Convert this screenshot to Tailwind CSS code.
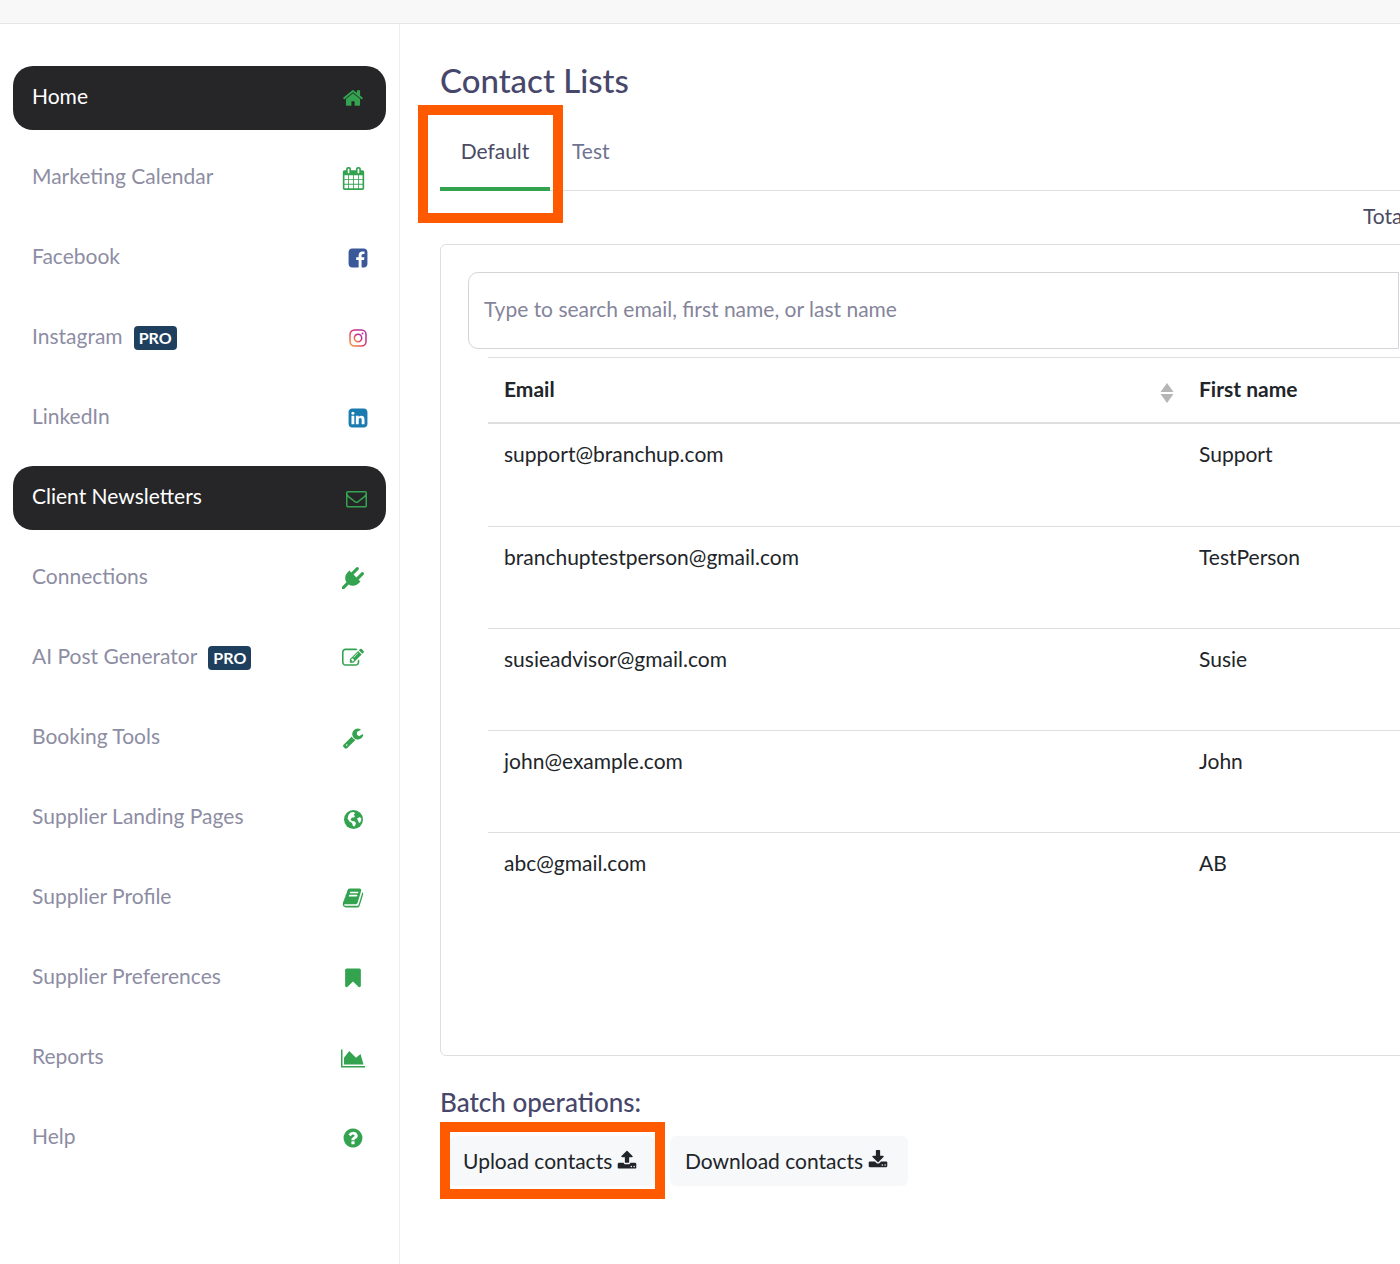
<!DOCTYPE html>
<html><head><meta charset="utf-8"><script src="https://cdn.jsdelivr.net/npm/@tailwindcss/browser@4"></script></head>
<body class="bg-white">
<div class="relative w-[1400px] h-[1264px] overflow-hidden font-['Lato',sans-serif] text-[21px] leading-[30px] text-[#212529]">
  <header class="h-[24px] bg-[#f8f8f9] border-b border-[#e6e6e8]"></header>
  <div class="flex h-[1240px]">
    <nav class="w-[400px] shrink-0 border-r border-[#eeeef0] pt-[42px] pl-[13px] pr-[13px] flex flex-col gap-[16px] text-[#8d8da3]">
      <a class="h-[64px] bg-[#262628] rounded-[20px] flex items-center justify-between pl-[19px] text-white"><span class="mb-[4px]">Home</span><svg class="w-[22px] h-[22px] mr-[22px] text-[#34a350] fill-current" viewBox="0 0 1792 1792"><path d="M1472 992v480q0 26-19 45t-45 19h-384v-384h-256v384h-384q-26 0-45-19t-19-45v-480q0-1 .5-3t.5-3l575-474 575 474q1 2 1 6zm223-69l-62 74q-8 9-21 11h-3q-13 0-21-7l-692-577-692 577q-12 8-24 7-13-2-21-11l-62-74q-8-10-7-23.500t11-21.500l719-599q32-26 76-26t76 26l244 204v-195q0-14 9-23t23-9h192q14 0 23 9t9 23v408l219 182q10 8 11 21.500t-7 23.500z"/></svg></a>
      <a class="h-[64px] flex items-center justify-between pl-[19px]"><span class="mb-[4px]">Marketing Calendar</span><svg class="w-[23px] h-[23px] mr-[21px] text-[#34a350] fill-current" viewBox="0 0 1792 1792"><path d="M192 1664h288v-288h-288v288zm352 0h320v-288h-320v288zm-352-352h288v-320h-288v320zm352 0h320v-320h-320v320zm-352-384h288v-288h-288v288zm736 736h320v-288h-320v288zm-384-736h320v-288h-320v288zm768 736h288v-288h-288v288zm-384-352h320v-320h-320v320zm-352-864v-288q0-13-9.500-22.500t-22.500-9.500h-64q-13 0-22.500 9.500t-9.500 22.500v288q0 13 9.500 22.500t22.500 9.500h64q13 0 22.500-9.500t9.500-22.500zm736 864h288v-320h-288v320zm-384-384h320v-288h-320v288zm384 0h288v-288h-288v288zm32-480v-288q0-13-9.500-22.500t-22.500-9.500h-64q-13 0-22.500 9.500t-9.500 22.500v288q0 13 9.500 22.500t22.500 9.500h64q13 0 22.500-9.500t9.500-22.500zm384-64v1280q0 52-38 90t-90 38h-1408q-52 0-90-38t-38-90v-1280q0-52 38-90t90-38h128v-96q0-66 47-113t113-47h64q66 0 113 47t47 113v96h384v-96q0-66 47-113t113-47h64q66 0 113 47t47 113v96h128q52 0 90 38t38 90z"/></svg></a>
      <a class="h-[64px] flex items-center justify-between pl-[19px]"><span class="mb-[4px]">Facebook</span><svg class="w-[22px] h-[22px] mr-[17px] text-[#3b5998] fill-current" viewBox="0 0 1792 1792"><path d="M1376 128q119 0 203.500 84.500t84.500 203.500v960q0 119-84.500 203.500t-203.500 84.500h-188v-595h199l30-232h-229v-148q0-56 23.500-84t91.500-28l122-1v-207q-63-9-178-9-136 0-217.500 80t-81.500 226v171h-200v232h200v595h-532q-119 0-203.500-84.500t-84.500-203.500v-960q0-119 84.500-203.500t203.500-84.500h960z"/></svg></a>
      <a class="h-[64px] flex items-center justify-between pl-[19px]"><span class="mb-[4px] flex items-center">Instagram<span class="ml-[11px] mt-[4px] h-[24px] w-[43px] rounded-[4px] bg-[#1f3f5f] text-white text-[16px] font-bold leading-[24px] text-center">PRO</span></span><svg class="w-[18px] h-[18px] mr-[19px]" viewBox="0 0 18 18" fill="none"><defs><linearGradient id="ig" x1="0" y1="1" x2="1" y2="0"><stop offset="0" stop-color="#f9a13c"/><stop offset=".5" stop-color="#e1306c"/><stop offset="1" stop-color="#a02fb0"/></linearGradient></defs><rect x="1" y="1" width="16" height="16" rx="4.500" stroke="url(#ig)" stroke-width="1.500"/><circle cx="9" cy="9" r="3.700" stroke="url(#ig)" stroke-width="1.500"/><circle cx="13.500" cy="4.500" r="1" fill="#c13584"/></svg></a>
      <a class="h-[64px] flex items-center justify-between pl-[19px]"><span class="mb-[4px]">LinkedIn</span><svg class="w-[22px] h-[22px] mr-[17px] text-[#1a7bb0] fill-current" viewBox="0 0 1792 1792"><path d="M365 1414h231v-694h-231v694zm246-908q-1-52-36-86t-93-34-94.500 34-36.500 86q0 51 35.500 85.500t92.500 34.500h1q59 0 95-34.500t36-85.500zm585 908h231v-398q0-154-73-233t-193-79q-136 0-209 117h2v-101h-231q3 66 0 694h231v-388q0-38 7-56 15-35 45-59.500t74-24.500q116 0 116 157v371zm468-998v960q0 119-84.500 203.500t-203.500 84.500h-960q-119 0-203.500-84.500t-84.500-203.500v-960q0-119 84.500-203.500t203.500-84.500h960q119 0 203.500 84.500t84.500 203.500z"/></svg></a>
      <a class="h-[64px] bg-[#262628] rounded-[20px] flex items-center justify-between pl-[19px] text-white"><span class="mb-[4px]">Client Newsletters</span><svg class="w-[21px] h-[21px] mr-[19px] text-[#34a350] fill-current" viewBox="0 0 1792 1792"><path d="M1664 1504v-768q-32 36-69 66-268 206-426 338-51 43-83 67t-86.500 48.500-102.500 24.500h-2q-48 0-102.500-24.500t-86.500-48.500-83-67q-158-132-426-338-37-30-69-66v768q0 13 9.500 22.500t22.500 9.500h1472q13 0 22.500-9.500t9.500-22.500zm0-1051v-24.500l-.5-13-3-12.500-5.500-9-9-7.500-14-2.500h-1472q-13 0-22.500 9.500t-9.500 22.500q0 168 147 284 193 152 401 317 6 5 35 29.500t46 37.500 44.500 31.500 50.500 27.500 43 9h2q20 0 43-9t50.500-27.500 44.500-31.500 46-37.500 35-29.500q208-165 401-317 54-43 100.500-115.500t46.500-131.500zm128-37v1088q0 66-47 113t-113 47h-1472q-66 0-113-47t-47-113v-1088q0-66 47-113t113-47h1472q66 0 113 47t47 113z"/></svg></a>
      <a class="h-[64px] flex items-center justify-between pl-[19px]"><span class="mb-[4px]">Connections</span><svg class="w-[22px] h-[22px] mr-[22px] text-[#34a350] fill-current" viewBox="0 0 1792 1792"><path d="M1755 453q37 38 37 90.500t-37 90.500l-401 400 150 150-160 160q-163 163-389.500 186.500t-411.500-100.500l-362 362h-181v-181l362-362q-124-185-100.500-411.500t186.500-389.500l160-160 150 150 400-401q38-37 91-37t90 37 37 90.500-37 90.500l-400 401 234 234 401-400q38-37 91-37t90 37z"/></svg></a>
      <a class="h-[64px] flex items-center justify-between pl-[19px]"><span class="mb-[4px] flex items-center">AI Post Generator<span class="ml-[11px] mt-[4px] h-[24px] w-[43px] rounded-[4px] bg-[#1f3f5f] text-white text-[16px] font-bold leading-[24px] text-center">PRO</span></span><svg class="w-[22px] h-[22px] mr-[22px] text-[#34a350] fill-current" viewBox="0 0 1792 1792"><path d="M888 1184l116-116-152-152-116 116v56h96v96h56zm440-720q-16-16-33 1l-350 350q-17 17-1 33t33-1l350-350q17-17 1-33zm80 594v190q0 119-84.500 203.500t-203.500 84.500h-832q-119 0-203.500-84.500t-84.500-203.500v-832q0-119 84.500-203.500t203.500-84.500h832q63 0 117 25 15 7 18 23 3 17-9 29l-49 49q-14 14-32 8-23-6-45-6h-832q-66 0-113 47t-47 113v832q0 66 47 113t113 47h832q66 0 113-47t47-113v-126q0-13 9-22l64-64q15-15 35-7t20 29zm-96-738l288 288-672 672h-288v-288zm444 132l-92 92-288-288 92-92q28-28 68-28t68 28l152 152q28 28 28 68t-28 68z"/></svg></a>
      <a class="h-[64px] flex items-center justify-between pl-[19px]"><span class="mb-[4px]">Booking Tools</span><svg class="w-[22px] h-[22px] mr-[22px] text-[#34a350] fill-current" viewBox="0 0 1792 1792"><path d="M448 1472q0-26-19-45t-45-19-45 19-19 45 19 45 45 19 45-19 19-45zm644-420l-682 682q-37 37-90 37-52 0-91-37l-106-108q-38-36-38-90 0-53 38-91l681-681q39 98 114.500 173.500t173.500 114.500zm634-435q0 39-23 106-47 134-164.500 217.500t-258.500 83.500q-185 0-316.500-131.500t-131.500-316.500 131.500-316.500 316.500-131.500q58 0 121.500 16.500t107.500 46.500q16 11 16 28t-16 28l-293 169v224l193 107q5-3 79-48.500t135.500-81 70.500-35.500q15 0 23.500 10t8.500 25z"/></svg></a>
      <a class="h-[64px] flex items-center justify-between pl-[19px]"><span class="mb-[4px]">Supplier Landing Pages</span><svg class="w-[19px] h-[19px] mr-[23px] mt-[2px]" viewBox="0 0 19 19"><circle cx="9.500" cy="9.500" r="9.500" fill="#34a350"/><path d="M6.500 2.500l3.500-.5 1 1.500-1.500 1.500 1.500 1-1 1.500h-2l-1.500 2 1.500 1.500 3 .5 1 2-1.500 3-1.500-.5-1-3-2.500-1.500-2-3 1-3.500zM13 8.500l3-1.500 1.500 2-1 3-1.500 1-1-2.500z" fill="#fff"/></svg></a>
      <a class="h-[64px] flex items-center justify-between pl-[19px]"><span class="mb-[4px]">Supplier Profile</span><svg class="w-[22px] h-[22px] mr-[22px] text-[#34a350] fill-current" viewBox="0 0 1792 1792"><path d="M1703 478q40 57 18 129l-275 906q-19 64-76.500 107.500t-122.500 43.500h-923q-77 0-148.500-53.500t-99.500-131.500q-24-67-2-127 0-4 3-27t4-37q1-8-3-21.500t-3-19.500q2-11 8-21t16.500-23.500 16.500-23.500q23-38 45-91.500t30-91.500q3-10 .5-30t-.5-28q3-11 17-28t17-23q21-36 42-92t25-90q1-9-2.500-32t.5-28q4-13 22-30.500t22-22.500q19-26 42.500-84.500t27.500-96.500q1-8-3-25.500t-2-26.500q2-8 9-18t18-23 17-21q8-12 16.500-30.500t15-35 16-36 19.500-32 26.500-23.500 36-11.500 47.500 5.500l-1 3q38-9 51-9h761q74 0 114 56t18 130l-274 906q-36 119-71.500 153.500t-128.500 34.500h-869q-27 0-38 15-11 16-1 43 24 70 144 70h923q29 0 56-15.500t35-41.500l300-987q7-22 5-57 38 15 59 43zm-1064 2q-4 13 2 22.500t20 9.500h608q13 0 25.500-9.500t16.500-22.500l21-64q4-13-2-22.500t-20-9.500h-608q-13 0-25.500 9.500t-16.500 22.500zm-83 256q-4 13 2 22.500t20 9.500h608q13 0 25.500-9.500t16.500-22.500l21-64q4-13-2-22.500t-20-9.500h-608q-13 0-25.500 9.500t-16.500 22.500z"/></svg></a>
      <a class="h-[64px] flex items-center justify-between pl-[19px]"><span class="mb-[4px]">Supplier Preferences</span><svg class="w-[22px] h-[22px] mr-[22px] text-[#34a350] fill-current" viewBox="0 0 1792 1792"><path d="M1420 128q23 0 44 9 33 13 52.500 41t19.500 62v1289q0 34-19.500 62t-52.500 41q-19 8-44 8-48 0-83-32l-441-424-441 424q-36 33-83 33-23 0-44-9-33-13-52.500-41t-19.500-62v-1289q0-34 19.500-62t52.500-41q21-9 44-9h1048z"/></svg></a>
      <a class="h-[64px] flex items-center justify-between pl-[19px]"><span class="mb-[4px]">Reports</span><svg class="w-[24px] h-[21px] mr-[21px] text-[#34a350] fill-current" viewBox="0 0 2048 1792"><path d="M2048 1536v128h-2048v-1536h128v1408h1920zm-384-1024l256 896h-1664v-576l448-576 576 576z"/></svg></a>
      <a class="h-[64px] flex items-center justify-between pl-[19px]"><span class="mb-[4px]">Help</span><svg class="w-[22px] h-[22px] mr-[22px] text-[#34a350] fill-current" viewBox="0 0 1792 1792"><path d="M1024 1376v-192q0-14-9-23t-23-9h-192q-14 0-23 9t-9 23v192q0 14 9 23t23 9h192q14 0 23-9t9-23zm256-672q0-88-55.500-163t-138.500-116-170-41q-243 0-371 213-15 24 8 42l132 100q7 6 19 6 16 0 25-12 53-68 86-92 34-24 86-24 48 0 85.500 26t37.500 59q0 38-20 61t-68 45q-63 28-115.500 86.500t-52.500 125.500v36q0 14 9 23t23 9h192q14 0 23-9t9-23q0-19 21.500-49.500t54.500-49.500q32-18 49-28.500t46-35 44.500-48 28-60.500 12.500-81zm384 192q0 209-103 385.500t-279.500 279.500-385.500 103-385.500-103-279.500-279.500-103-385.500 103-385.500 279.500-279.500 385.500-103 385.500 103 279.500 279.500 103 385.500z"/></svg></a>
    </nav>
    <main class="w-[1200px] shrink-0 pl-[40px]">
      <h1 class="text-[33px] leading-[40px] font-medium text-[#47476b] mt-[36px] h-[47px]">Contact Lists</h1>
      <div class="flex h-[84px] border-b border-[#e0e0e3] text-[#6f7390]">
        <div class="w-[110px] h-[84px] border-b-[4px] border-[#34a350] text-center pt-[29px] text-[#4a4a63]">Default</div>
        <div class="pl-[22px] pt-[29px]">Test</div>
      </div>
      <div class="pl-[923px] h-[53px] pt-[10px] text-[#4a4a63] whitespace-nowrap">Total contacts: 5</div>
      <section class="border border-[#dedee1] rounded-[6px] h-[812px] pt-[27px] pl-[27px]">
        <div class="w-[931px] h-[77px] border border-[#d5d5d9] rounded-l-[10px] pl-[15px] pt-[21px] text-[#85859a]">Type to search email, first name, or last name</div>
        <div class="ml-[20px] mt-[8px] border-t border-[#dedee1]">
          <div class="grid grid-cols-[695px_1fr] h-[66px] border-b-[2px] border-[#dedee1] font-bold items-center">
            <div class="relative pl-[16px] flex justify-between pr-[9px]"><span class="-mt-[2px]">Email</span><svg class="w-[14px] h-[20px] mt-[7px]" viewBox="0 0 14 20"><path d="M7 0l6.500 9h-13zM7 20l-6.500-9h13z" fill="#b5b5b5"/></svg></div>
            <div class="pl-[16px] -mt-[2px]">First name</div>
          </div>
          <div class="grid grid-cols-[695px_1fr] h-[103px] border-b border-[#dedee1] pt-[15px]"><div class="pl-[16px]">support@branchup.com</div><div class="pl-[16px]">Support</div></div>
          <div class="grid grid-cols-[695px_1fr] h-[102px] border-b border-[#dedee1] pt-[15px]"><div class="pl-[16px]">branchuptestperson@gmail.com</div><div class="pl-[16px]">TestPerson</div></div>
          <div class="grid grid-cols-[695px_1fr] h-[102px] border-b border-[#dedee1] pt-[15px]"><div class="pl-[16px]">susieadvisor@gmail.com</div><div class="pl-[16px]">Susie</div></div>
          <div class="grid grid-cols-[695px_1fr] h-[102px] border-b border-[#dedee1] pt-[15px]"><div class="pl-[16px]">john@example.com</div><div class="pl-[16px]">John</div></div>
          <div class="grid grid-cols-[695px_1fr] h-[102px] pt-[15px]"><div class="pl-[16px]">abc@gmail.com</div><div class="pl-[16px]">AB</div></div>
        </div>
      </section>
      <h2 class="mt-[30px] text-[26px] leading-[32px] font-medium text-[#47476b]">Batch operations:</h2>
      <div class="flex gap-[15px] mt-[18px] ml-[10px]">
        <button class="h-[50px] w-[205px] bg-[#f7f8fa] rounded-[6px] flex items-center pl-[13px] gap-[5px]">Upload contacts<svg class="w-[20px] h-[20px] mb-[2px]" viewBox="0 0 1792 1792" fill="#212529"><path d="M1344 1472q0-26-19-45t-45-19-45 19-19 45 19 45 45 19 45-19 19-45zm256 0q0-26-19-45t-45-19-45 19-19 45 19 45 45 19 45-19 19-45zm128-224v320q0 40-28 68t-68 28h-1472q-40 0-68-28t-28-68v-320q0-40 28-68t68-28h427q21 56 70.500 92t110.500 36h256q61 0 110.500-36t70.500-92h427q40 0 68 28t28 68zm-325-648q-17 40-59 40h-256v448q0 26-19 45t-45 19h-256q-26 0-45-19t-19-45v-448h-256q-42 0-59-40-17-39 14-69l448-448q18-19 45-19t45 19l448 448q31 30 14 69z"/></svg></button>
        <button class="h-[50px] w-[238px] bg-[#f7f8fa] rounded-[6px] flex items-center pl-[15px] gap-[5px]">Download contacts<svg class="w-[20px] h-[20px] mb-[2px]" viewBox="0 0 1792 1792" fill="#212529"><path d="M1344 1344q0-26-19-45t-45-19-45 19-19 45 19 45 45 19 45-19 19-45zm256 0q0-26-19-45t-45-19-45 19-19 45 19 45 45 19 45-19 19-45zm128-224v320q0 40-28 68t-68 28h-1472q-40 0-68-28t-28-68v-320q0-40 28-68t68-28h465l135 136q58 56 136 56t136-56l136-136h464q40 0 68 28t28 68zm-325-569q17 41-14 70l-448 448q-18 19-45 19t-45-19l-448-448q-31-29-14-70 17-39 59-39h256v-448q0-26 19-45t45-19h256q26 0 45 19t19 45v448h256q42 0 59 39z"/></svg></button>
      </div>
    </main>
  </div>
  <div class="absolute left-[418px] top-[105px] w-[145px] h-[118px] border-[10px] border-[#ff5a00]"></div>
  <div class="absolute left-[440px] top-[1122px] w-[225px] h-[77px] border-[10px] border-[#ff5a00]"></div>
</div>
</body></html>
